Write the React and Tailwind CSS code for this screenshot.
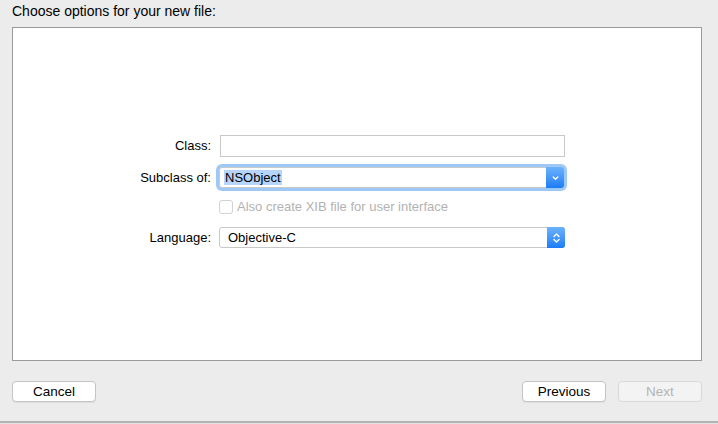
import React from "react";

const Chevron = ({ double }) => (
  <svg width="9" height="14" viewBox="0 0 9 14" fill="none" stroke="white" strokeWidth="1.4" strokeLinecap="round" strokeLinejoin="round">
    {double ? (
      <>
        <path d="M2 5.5 L4.5 3 L7 5.5" />
        <path d="M2 8.5 L4.5 11 L7 8.5" />
      </>
    ) : (
      <path d="M2.2 6 L4.5 8.3 L6.8 6" />
    )}
  </svg>
);

const Popup = ({ children, double, focused, pad }) => (
  <div
    className={
      "relative flex h-[21px] items-center rounded-[3px] border border-[#c8c8c8] bg-white " +
      (focused ? "ring-[3px] ring-[#9ec9f7]" : "")
    }
  >
    <div className={"flex-1 leading-[16px] " + pad}>{children}</div>
    <div className="flex h-[21px] w-[18px] -mr-px -my-px items-center justify-center rounded-r-[3px] bg-gradient-to-b from-[#6bb2fb] to-[#1a7cf6]">
      <Chevron double={double} />
    </div>
  </div>
);

const Button = ({ children, disabled }) => (
  <button
    className={
      "h-[21px] w-[84px] rounded-[4px] border text-[13.5px] leading-[18px] " +
      (disabled
        ? "border-[#d8d8d8] bg-[#f3f3f3] text-[#b4b4b4]"
        : "border-[#c4c4c4] bg-white text-black shadow-[0_1px_0_rgba(0,0,0,0.06)]")
    }
  >
    {children}
  </button>
);

export default function App() {
  return (
    <div className="flex h-[424px] w-[718px] flex-col bg-[#ececec] font-['Liberation_Sans',Arial,sans-serif] text-[13px] text-black">
      <div className="h-[27px] px-3 pt-[3px] text-[14px] leading-[16px]">Choose options for your new file:</div>

      <div className="ml-3 h-[334px] w-[690px] border border-[#9b9b9b] bg-white pt-[107px]">
        <div className="flex flex-col">
          <div className="flex h-[22px] items-center">
            <div className="w-[198px] text-right">Class:</div>
            <div className="ml-[9px] h-[22px] w-[345px] border border-[#c8c8c8] bg-white" />
          </div>

          <div className="mt-[10px] flex items-center">
            <div className="w-[198px] text-right">Subclass of:</div>
            <div className="ml-[8px] w-[345px]">
              <Popup focused pad="pl-[4px]">
                <span className="bg-[#b5d5fd] px-[1px]">NSObject</span>
              </Popup>
            </div>
          </div>

          <div className="mt-[12px] flex h-[14px] items-center">
            <div className="w-[198px]" />
            <div className="ml-[8px] flex items-center text-[#b2b2b2]">
              <div className="h-[14px] w-[14px] rounded-[3px] border border-[#d2d2d2] bg-white" />
              <span className="ml-[4px] leading-[14px]">Also create XIB file for user interface</span>
            </div>
          </div>

          <div className="mt-[13px] flex items-center">
            <div className="w-[198px] text-right">Language:</div>
            <div className="ml-[8px] w-[346px]">
              <Popup double pad="pl-[8px]">Objective-C</Popup>
            </div>
          </div>
        </div>
      </div>

      <div className="mt-[20px] flex px-3">
        <Button>Cancel</Button>
        <div className="flex-1" />
        <Button>Previous</Button>
        <div className="ml-[12px] mr-[4px]">
          <Button disabled>Next</Button>
        </div>
      </div>

      <div className="flex-1" />
      <div className="h-[2px] bg-[#b4b4b4]" />
      <div className="h-[1px] bg-[#e2e2e2]" />
    </div>
  );
}
